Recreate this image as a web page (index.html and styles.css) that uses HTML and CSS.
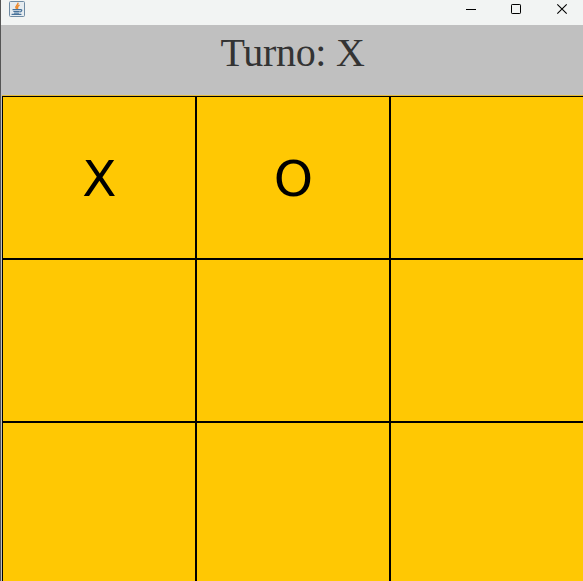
FILE: index.html
```html
<!DOCTYPE html>
<html lang="es">
<head>
<meta charset="utf-8">
<title>Turno</title>
<link rel="stylesheet" href="styles.css">
</head>
<body>
<div class="window">
  <header class="titlebar">
    <svg class="java" width="16" height="16" viewBox="0 0 16 16">
      <rect x=".5" y=".5" width="15" height="15" rx="1" fill="#e6ecf0" stroke="#6f8ba3"/>
      <g fill="none" stroke-linecap="round">
        <path d="M9 2.200C9.300 4.200 5.600 4.700 7.300 7.300M10 4.300C8 5.300 8.300 6 8.600 7.300" stroke="#ee8a2e" stroke-width="1.500"/>
        <path d="M4 8.700H10.500M4.800 10.500H10M5.500 12H9.500M11 8.600C13.800 8.200 13 10.400 11 11M3 13.300H12" stroke="#47729a" stroke-width="1.200"/>
      </g>
    </svg>
    <svg class="controls" width="136" height="24" viewBox="0 0 136 24" fill="none" stroke="#000">
      <path d="M19 9.500H29"/>
      <rect x="64.500" y="4.500" width="9" height="9" rx=".7"/>
      <path d="M110.300 4.300L119.700 13.700M119.700 4.300L110.300 13.700" stroke-width="1.100"/>
    </svg>
  </header>
  <h1 class="turn">Turno: X</h1>
  <main class="board">
    <div class="cell">X</div><div class="cell">O</div><div class="cell"></div>
    <div class="cell"></div><div class="cell"></div><div class="cell"></div>
    <div class="cell"></div><div class="cell"></div><div class="cell"></div>
  </main>
</div>
</body>
</html>
```
FILE: styles.css
```css
* { box-sizing: border-box; }
body { margin: 0; overflow: hidden; background: #c0c0c0; }
.window { height: 581px; overflow: hidden; border-left: 1px solid #555; }
.titlebar { display: flex; justify-content: space-between; height: 25px; padding: 1px 0 0 8px; background: #f2f4f3; }
.controls { margin-top: -1px; }
.turn { height: 71px; margin: 0; padding-left: 1px; color: #333; font: 40px/56px "Liberation Serif", serif; letter-spacing: -.3px; text-align: center; }
.board { display: grid; grid-template-columns: repeat(3, 194px); grid-auto-rows: 163px; margin-left: 1px; box-shadow: 0 -1px #e5bd3a; }
.cell { display: flex; align-items: center; justify-content: center; padding: 2px 0 0 1px; border: 1px solid #000; background: #ffc803; color: #000; font: 50px/1 "DejaVu Sans", sans-serif; }
```
